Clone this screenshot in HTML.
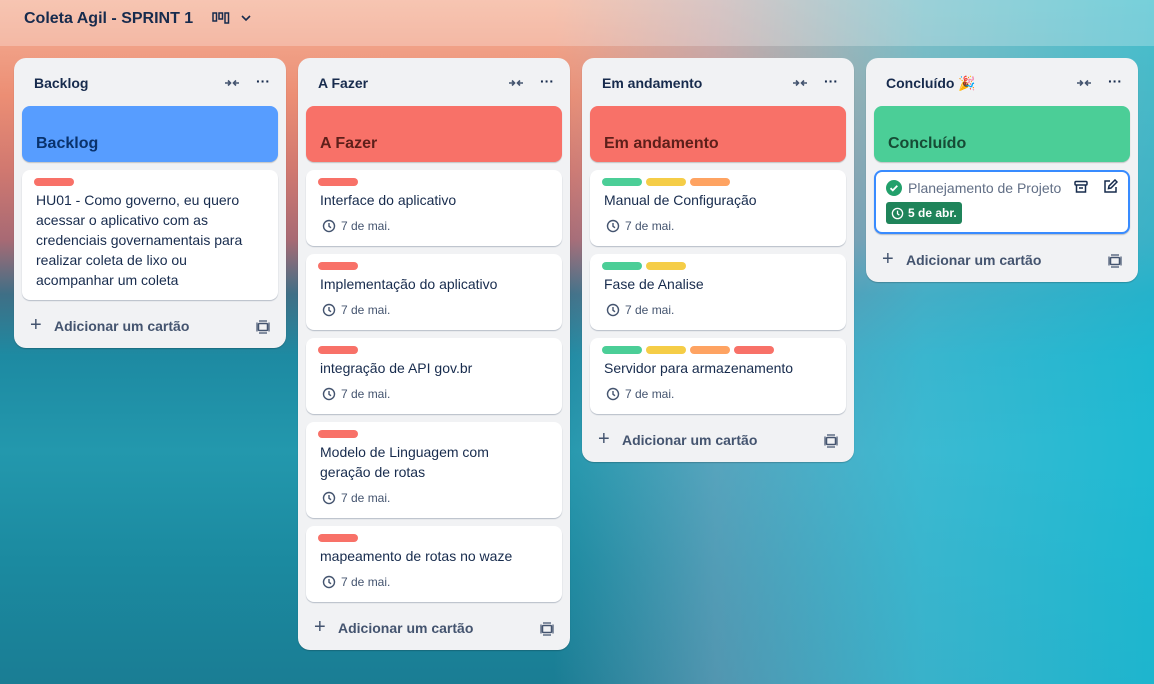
<!DOCTYPE html>
<html><head><meta charset="utf-8"><style>
*{box-sizing:border-box;margin:0;padding:0}
body{width:1154px;height:684px;overflow:hidden;font-family:"Liberation Sans","DejaVu Sans",sans-serif;color:#172b4d;position:relative;
background:linear-gradient(180deg,#f4b298 0%,#ec8e74 14%,#d07870 25%,#a86a74 35%,#3f6f86 43%,#1d8aa2 52%,#2398ad 66%,#1b8aa0 82%,#1a7d94 100%);}
.bgr{position:absolute;left:0;top:0;width:1154px;height:684px;background:linear-gradient(90deg,rgba(80,200,225,0) 0%,rgba(80,200,225,0) 48%,rgba(150,180,210,.45) 62%,rgba(70,200,225,.7) 80%,rgba(30,195,220,.8) 100%);}
.hdr{position:absolute;left:0;top:0;width:1154px;height:46px;background:rgba(255,255,255,.25)}
.hdr h1{position:absolute;left:24px;top:10px;font-size:16px;font-weight:bold;color:#172b4d}
.hdr .ic{position:absolute;left:212px;top:10px;font-size:14px;font-weight:bold}
.col{position:absolute;top:58px;width:272px;background:#f1f2f4;border-radius:12px;box-shadow:0 1px 1px rgba(0,0,0,.2)}
.ch{height:48px;position:relative}
.ch .t{position:absolute;left:20px;top:17px;font-size:14px;font-weight:bold}
.ch .d{position:absolute;right:16px;top:15px;font-size:14px;font-weight:bold}
.cover{margin:0 8px 8px;height:56px;border-radius:8px;position:relative;box-shadow:0 1px 1px rgba(0,0,0,.2)}
.cover span{position:absolute;left:14px;top:29px;font-size:16px;font-weight:bold}
.card{margin:0 8px 8px;background:#fff;border-radius:8px;padding:8px 24px 10px 14px;box-shadow:0 1px 1px rgba(9,30,66,.25);font-size:14px;line-height:20px;color:#172b4d}
.lb{display:flex;gap:4px;height:8px;margin-bottom:4px;margin-left:-2px}
.lb i{width:40px;height:8px;border-radius:4px;display:block}
.r{background:#f87168}.g{background:#4bce97}.y{background:#f5cd47}.o{background:#fea362}
.dt{font-size:12px;color:#44546f;margin-top:6px;padding-left:2px;display:flex;align-items:center;gap:5px;height:20px}
.add{height:40px;position:relative;font-size:14px;font-weight:bold;color:#44546f}
.add span{position:absolute;left:40px;top:10px}
.add b{position:absolute;left:16px;top:6px;font-size:20px;font-weight:normal}
.add svg{position:absolute;right:16px;top:12px}
</style></head><body>
<div class="bgr"></div>
<div class="hdr"><h1>Coleta Agil - SPRINT 1</h1><div class="ic"><svg width="18" height="14" viewBox="0 0 18 14" style="vertical-align:-2px"><rect x="1" y="2" width="3.5" height="8" fill="none" stroke="#172b4d" stroke-width="1.5"/><rect x="7" y="2" width="3.5" height="6" fill="none" stroke="#172b4d" stroke-width="1.5"/><rect x="13" y="2" width="3.5" height="10" fill="none" stroke="#172b4d" stroke-width="1.5"/></svg><svg width="12" height="10" viewBox="0 0 12 10" style="margin-left:10px"><path d="M2 3l4 4 4-4" fill="none" stroke="#172b4d" stroke-width="1.6"/></svg></div></div>

<svg width="0" height="0" style="position:absolute"><defs>
<symbol id="clk" viewBox="0 0 16 16"><circle cx="8" cy="8" r="6.3" fill="none" stroke="currentColor" stroke-width="1.6"/><path d="M8 4.5V8.3L10.3 10" fill="none" stroke="currentColor" stroke-width="1.6"/></symbol>
<symbol id="col" viewBox="0 0 16 16"><path d="M1 8h5M4 5.5L6.5 8 4 10.5M15 8h-5M12 5.5L9.5 8 12 10.5" fill="none" stroke="#44546f" stroke-width="1.6"/></symbol>
<symbol id="tpl" viewBox="0 0 14 14"><rect x="2.5" y="3.5" width="9" height="7" rx="1" fill="none" stroke="#44546f" stroke-width="1.5"/><path d="M1 2.5v9M13 2.5v9M3 1h8M3 13h8" fill="none" stroke="#44546f" stroke-width="1.2"/></symbol>
</defs></svg>

<div class="col" style="left:14px">
<div class="ch"><span class="t">Backlog</span><svg style="position:absolute;right:46px;top:17px" width="16" height="16"><use href="#col"/></svg><span class="d">···</span></div>
<div class="cover" style="background:#579dff"><span style="color:#09326c">Backlog</span></div>
<div class="card"><div class="lb"><i class="r"></i></div>HU01 - Como governo, eu quero acessar o aplicativo com as credenciais governamentais para realizar coleta de lixo ou acompanhar um coleta</div>
<div class="add"><b>+</b><span>Adicionar um cartão</span><svg width="14" height="14"><use href="#tpl"/></svg></div>
</div>

<div class="col" style="left:298px">
<div class="ch"><span class="t">A Fazer</span><svg style="position:absolute;right:46px;top:17px" width="16" height="16"><use href="#col"/></svg><span class="d">···</span></div>
<div class="cover" style="background:#f87168"><span style="color:#5d1f1a">A Fazer</span></div>
<div class="card"><div class="lb"><i class="r"></i></div>Interface do aplicativo<div class="dt"><svg width="14" height="14"><use href="#clk"/></svg>7 de mai.</div></div>
<div class="card"><div class="lb"><i class="r"></i></div>Implementação do aplicativo<div class="dt"><svg width="14" height="14"><use href="#clk"/></svg>7 de mai.</div></div>
<div class="card"><div class="lb"><i class="r"></i></div>integração de API gov.br<div class="dt"><svg width="14" height="14"><use href="#clk"/></svg>7 de mai.</div></div>
<div class="card"><div class="lb"><i class="r"></i></div>Modelo de Linguagem com<br>geração de rotas<div class="dt"><svg width="14" height="14"><use href="#clk"/></svg>7 de mai.</div></div>
<div class="card"><div class="lb"><i class="r"></i></div>mapeamento de rotas no waze<div class="dt"><svg width="14" height="14"><use href="#clk"/></svg>7 de mai.</div></div>
<div class="add"><b>+</b><span>Adicionar um cartão</span><svg width="14" height="14"><use href="#tpl"/></svg></div>
</div>

<div class="col" style="left:582px">
<div class="ch"><span class="t">Em andamento</span><svg style="position:absolute;right:46px;top:17px" width="16" height="16"><use href="#col"/></svg><span class="d">···</span></div>
<div class="cover" style="background:#f87168"><span style="color:#5d1f1a">Em andamento</span></div>
<div class="card"><div class="lb"><i class="g"></i><i class="y"></i><i class="o"></i></div>Manual de Configuração<div class="dt"><svg width="14" height="14"><use href="#clk"/></svg>7 de mai.</div></div>
<div class="card"><div class="lb"><i class="g"></i><i class="y"></i></div>Fase de Analise<div class="dt"><svg width="14" height="14"><use href="#clk"/></svg>7 de mai.</div></div>
<div class="card"><div class="lb"><i class="g"></i><i class="y"></i><i class="o"></i><i class="r"></i></div>Servidor para armazenamento<div class="dt"><svg width="14" height="14"><use href="#clk"/></svg>7 de mai.</div></div>
<div class="add"><b>+</b><span>Adicionar um cartão</span><svg width="14" height="14"><use href="#tpl"/></svg></div>
</div>

<div class="col" style="left:866px">
<div class="ch"><span class="t">Concluído 🎉</span><svg style="position:absolute;right:46px;top:17px" width="16" height="16"><use href="#col"/></svg><span class="d">···</span></div>
<div class="cover" style="background:#4bce97"><span style="color:#164b35">Concluído</span></div>
<div class="card" style="border:2px solid #388bff;padding:6px 10px 6px;position:relative;height:64px">
<div style="display:flex;align-items:center;gap:6px;color:#626f86"><svg width="16" height="16" viewBox="0 0 16 16"><circle cx="8" cy="8" r="8" fill="#22a06b"/><path d="M4.5 8.2l2.3 2.2 4.5-4.6" fill="none" stroke="#fff" stroke-width="1.8"/></svg>Planejamento de Projeto</div>
<svg style="position:absolute;right:40px;top:8px" width="14" height="14" viewBox="0 0 14 14"><rect x="1" y="1.5" width="12" height="3.5" rx="1" fill="none" stroke="#172b4d" stroke-width="1.5"/><path d="M2.5 5v7h9V5M5 8h4" fill="none" stroke="#172b4d" stroke-width="1.5"/></svg>
<svg style="position:absolute;right:10px;top:7px" width="15" height="15" viewBox="0 0 15 15"><path d="M7 2H2v11h11V8" fill="none" stroke="#172b4d" stroke-width="1.5"/><path d="M5.5 9.5l.5-2.5 6-6 2 2-6 6z" fill="none" stroke="#172b4d" stroke-width="1.5"/></svg>
<div style="display:inline-flex;align-items:center;gap:4px;background:#1f845a;color:#fff;font-size:12px;font-weight:bold;border-radius:3px;padding:0 5px;height:22px;margin-top:4px"><svg width="13" height="13" style="color:#fff"><use href="#clk"/></svg>5 de abr.</div>
</div>
<div class="add"><b>+</b><span>Adicionar um cartão</span><svg width="14" height="14"><use href="#tpl"/></svg></div>
</div>
</body></html>
